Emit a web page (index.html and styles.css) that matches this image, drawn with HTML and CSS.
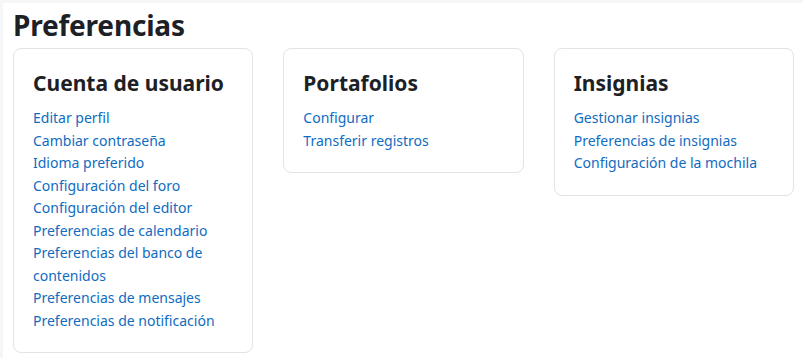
FILE: index.html
```html
<!DOCTYPE html>
<html lang="es">
<head>
<meta charset="utf-8">
<title>Preferencias</title>
<link rel="stylesheet" href="styles.css">
</head>
<body>
<main class="page">
  <h2 class="page-title">Preferencias</h2>
  <div class="grid">
    <section class="card">
      <h3 class="card-title">Cuenta de usuario</h3>
      <ul class="links">
        <li><a href="#">Editar perfil</a></li>
        <li><a href="#">Cambiar contraseña</a></li>
        <li><a href="#">Idioma preferido</a></li>
        <li><a href="#">Configuración del foro</a></li>
        <li><a href="#">Configuración del editor</a></li>
        <li><a href="#">Preferencias de calendario</a></li>
        <li><a href="#">Preferencias del banco de contenidos</a></li>
        <li><a href="#">Preferencias de mensajes</a></li>
        <li><a href="#">Preferencias de notificación</a></li>
      </ul>
    </section>
    <section class="card">
      <h3 class="card-title">Portafolios</h3>
      <ul class="links">
        <li><a href="#">Configurar</a></li>
        <li><a href="#">Transferir registros</a></li>
      </ul>
    </section>
    <section class="card">
      <h3 class="card-title">Insignias</h3>
      <ul class="links">
        <li><a href="#">Gestionar insignias</a></li>
        <li><a href="#">Preferencias de insignias</a></li>
        <li><a href="#">Configuración de la mochila</a></li>
      </ul>
    </section>
  </div>
</main>
</body>
</html>
```
FILE: styles.css
```css
html, body {
  margin: 0;
  padding: 0;
}
body {
  background: #f5f6f7;
  font-family: "Noto Sans", "Open Sans", sans-serif;
  color: #1d2125;
}
.page {
  background: #ffffff;
  margin: 3px 0 0 3px;
  padding: 4px 9px 20px 10px;
  min-height: 340px;
}
.page-title {
  margin: 0;
  font-size: 28px;
  font-weight: 700;
  line-height: 36px;
  letter-spacing: -0.2px;
}
.grid {
  display: grid;
  grid-template-columns: repeat(3, 1fr);
  gap: 30px;
  align-items: start;
  margin-top: 5px;
}
.card {
  border: 1px solid #e2e3e5;
  border-radius: 8px;
  padding: 20px 20px 20px 19px;
}
.card-title {
  margin: 0 0 9px;
  font-size: 21px;
  font-weight: 700;
  line-height: 29px;
}
.links {
  list-style: none;
  margin: 0;
  padding: 0;
  font-size: 14px;
  line-height: 22.5px;
}
.links a {
  color: #0f6cbf;
  text-decoration: none;
}
```
